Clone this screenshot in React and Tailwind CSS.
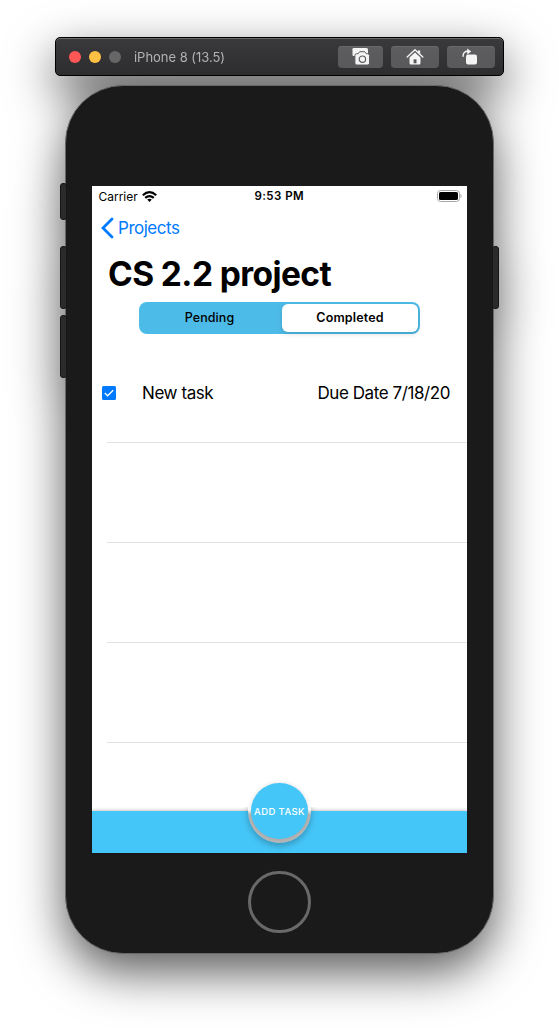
import React from "react";

function ToolButton({ children, className }) {
  return (
    <button className={`flex h-[22px] items-center justify-center rounded-[4px] bg-gradient-to-b from-[#5d5d5f] to-[#59595b] shadow-[inset_0_1px_0_#69696b] ${className}`}>
      {children}
    </button>
  );
}

function TitleBar() {
  return (
    <header className="flex h-[39px] w-[449px] items-center rounded-[5px] border border-black bg-gradient-to-b from-[#3a3a3c] to-[#2d2d2f] pr-2 pl-[13px] shadow-[inset_0_1px_0_#6a6a6b]">
      <div className="flex gap-2">
        <span className="size-3 rounded-full bg-[#ff5755]" />
        <span className="size-3 rounded-full bg-[#ffc043]" />
        <span className="size-3 rounded-full bg-[#666667]" />
      </div>
      <h1 className="ml-[13px] pt-[2px] text-[13px] tracking-[-0.03px] whitespace-nowrap text-[#b3b3b4]">iPhone 8 (13.5)</h1>
      <div className="ml-auto flex gap-2">
        <ToolButton className="w-[45px]">
          <svg width="18" height="18" viewBox="0 0 18 18">
            <path d="M1.7 0H14.5Q16 0 16 1.5V8H1.5Q.5 8 .5 7V1.2Q.5 0 1.7 0Z" fill="#f4f4f5" />
            <path d="M4.7 5.7h1.5l1.5-2h5l1.5 2h1.5q1.8 0 1.8 1.8v7.6q0 1.9-1.8 1.9h-11q-1.8 0-1.8-1.9V7.5q0-1.8 1.8-1.8Z" fill="#f4f4f5" stroke="#5c5c5e" strokeWidth="1" />
            <circle cx="10.4" cy="11.2" r="3.2" fill="#f4f4f5" stroke="#5c5c5e" strokeWidth="1.2" />
          </svg>
        </ToolButton>
        <ToolButton className="w-[48px]">
          <svg width="18" height="18" viewBox="0 0 18 18">
            <path d="M12 2.6h2.2v4.2L12 4.8Z" fill="#f4f4f5" />
            <path d="M1.2 9 9 1.7 16.8 9" fill="none" stroke="#f4f4f5" strokeWidth="1.4" strokeLinecap="round" strokeLinejoin="round" />
            <path d="M9 4.4 14.5 9.5V15q0 1.5-1.5 1.5H5Q3.5 16.5 3.5 15V9.5Z" fill="#f4f4f5" />
            <path d="M7.6 11.3h2.9v4H7.6Z" fill="#59595b" />
          </svg>
        </ToolButton>
        <ToolButton className="w-[48px]">
          <svg width="18" height="18" viewBox="0 0 18 18">
            <rect x="4" y="6.5" width="11" height="10" rx="2" fill="#f4f4f5" />
            <path d="M1.1 8.3C1 4.7 2.8 3.3 6 3.3" fill="none" stroke="#f4f4f5" strokeWidth="1.4" strokeLinecap="round" />
            <path d="M5.2 .6 9.2 3.5 5.2 6.4Z" fill="#f4f4f5" />
          </svg>
        </ToolButton>
      </div>
    </header>
  );
}

function StatusBar() {
  return (
    <div className="grid h-5 grid-cols-3 items-center pr-[5px] pl-[6.5px] text-[12px]">
      <div className="flex items-center gap-[4.5px]">
        <span className="pt-px tracking-[-0.02px]">Carrier</span>
        <svg width="15" height="11" viewBox="0 0 15 11" fill="none" stroke="#000" strokeWidth="2.2">
          <path d="M.8 4.2Q7.5-1.8 14.2 4.2" />
          <path d="M3.2 6.9Q7.5 3.2 11.8 6.9" />
          <path d="M5.2 8.6Q7.5 6.8 9.8 8.6L7.5 11Z" fill="#000" stroke="none" />
        </svg>
      </div>
      <span className="pt-[2px] pr-[2px] text-center text-[11.5px] font-semibold tracking-[0.45px] whitespace-nowrap">9:53 PM</span>
      <svg className="ml-auto" width="25" height="12" viewBox="0 0 25 12">
        <rect x=".5" y=".5" width="22" height="11" rx="3" fill="#fff" stroke="#a6a6a6" />
        <rect x="2" y="2" width="19" height="8" rx="1.6" />
        <path d="M23.5 4v4q1.2-.5 1.2-2t-1.2-2Z" fill="#a6a6a6" />
      </svg>
    </div>
  );
}

function Screen() {
  return (
    <main className="flex h-[667px] w-[375px] flex-col bg-white text-black">
      <StatusBar />
      <nav className="flex h-11 items-center gap-[4px] pl-[9px] text-[#007aff]">
        <svg width="13" height="22" viewBox="0 0 13 22" fill="none" stroke="currentColor" strokeWidth="2.8" strokeLinecap="round">
          <path d="M11 2 2 11l9 9" />
        </svg>
        <span className="pt-[2px] text-[17px] tracking-[-0.48px]">Projects</span>
      </nav>
      <h2 className="flex h-[52px] items-center pb-[3px] pl-4 text-[33.5px] font-bold tracking-[-0.6px] whitespace-nowrap">CS 2.2 project</h2>
      <div className="mx-auto flex h-8 w-[281px] rounded-[8px] bg-[#4dbbe7] p-[2px] text-[12.5px]">
        <div className="flex flex-1 items-center justify-center pt-px pr-[4px] font-medium tracking-[0.1px]">Pending</div>
        <div className="flex w-[136px] items-center justify-center rounded-[6px] bg-white pt-px font-semibold tracking-[0.15px] shadow-[0_2px_5px_rgba(0,0,0,0.14)]">Completed</div>
      </div>
      <div className="flex h-[468px] flex-col pt-[9px]">
        <div className="flex h-[100px] items-center pr-[17px] pl-[10px] text-[17px] tracking-[-0.42px]">
          <svg width="14" height="14" viewBox="0 0 14 14">
            <rect width="14" height="14" rx="1.5" fill="#007aff" />
            <path d="m2.8 7 2.8 2.8 5.6-5.6" fill="none" stroke="#fff" strokeWidth="1.3" />
          </svg>
          <span className="ml-[26px] pt-[2px]">New task</span>
          <span className="ml-auto pt-[2px]">Due Date 7/18/20</span>
        </div>
        <div className="-mt-px ml-[15px] h-px bg-[#e1e1e1]" />
        <div className="ml-[15px] h-[100px] border-b border-[#e1e1e1]" />
        <div className="ml-[15px] h-[100px] border-b border-[#e1e1e1]" />
        <div className="ml-[15px] h-[100px] border-b border-[#e1e1e1]" />
      </div>
      <footer className="relative mt-auto flex h-[42px] shrink-0 justify-center bg-[#45c6f8] shadow-[0_-1px_3px_rgba(0,0,0,0.22)]">
        <div className="absolute -top-[32px] h-16 w-[63px] rounded-full bg-gradient-to-b from-white from-48% to-[#b7b7b7] to-56% shadow-[0_3px_6px_rgba(0,0,0,0.25)] [clip-path:inset(28px_-10px_-12px_-10px)]" />
        <button className="absolute -top-[28px] flex h-14 w-[57px] items-center justify-center rounded-full bg-[#45c6f8] pt-[3px] text-[9.5px] font-medium tracking-[0.4px] whitespace-nowrap text-white shadow-[0_0_5px_rgba(0,0,0,0.13)]">ADD TASK</button>
      </footer>
    </main>
  );
}

export default function App() {
  return (
    <div className="h-[1028px] w-[559px] overflow-hidden bg-white pt-[37px] font-['Inter','Liberation_Sans',sans-serif]">
      <div className="flex flex-col items-center gap-[9px] drop-shadow-[0_18px_24px_rgba(0,0,0,0.65)]">
        <TitleBar />
        <div className="relative h-[869px] w-[429px]">
          <div className="flex h-full flex-col items-center rounded-[58px] border border-[#686868] bg-[#1a1a1a] pt-[100px]">
            <Screen />
            <div className="mt-[18px] h-[62px] w-[63px] rounded-full border-[3px] border-[#696969]" />
          </div>
          <span className="absolute top-[98px] -left-[5px] h-[37px] w-[7px] rounded-[3px] border border-[#161616] bg-[#2b2b2b]" />
          <span className="absolute top-[161px] -left-[5px] h-[63px] w-[7px] rounded-[3px] border border-[#161616] bg-[#2b2b2b]" />
          <span className="absolute top-[230px] -left-[5px] h-[63px] w-[7px] rounded-[3px] border border-[#161616] bg-[#2b2b2b]" />
          <span className="absolute top-[161px] -right-[5px] h-[63px] w-[7px] rounded-[3px] border border-[#161616] bg-[#2b2b2b]" />
        </div>
      </div>
    </div>
  );
}
